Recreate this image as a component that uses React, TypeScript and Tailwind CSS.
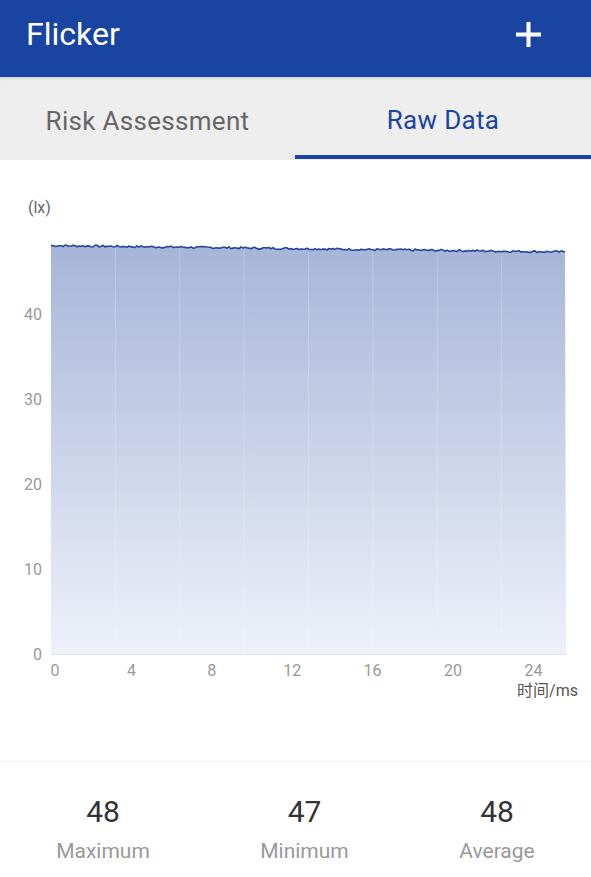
import React from "react";

const PLOT_LEFT = 51;
const PLOT_RIGHT = 566;
const PLOT_BOTTOM = 494; // svg coordinates (svg starts at page y=160)
const PX_PER_LX = 8.5;

function makeLine() {
    const pts: string[] = [];
    let seed = 7;
    const rand = () => {
        seed = (seed * 9301 + 49297) % 233280;
        return seed / 233280;
    };
    for (let x = PLOT_LEFT; x <= PLOT_RIGHT; x += 2) {
        const t = (x - PLOT_LEFT) / (PLOT_RIGHT - PLOT_LEFT);
        const v = 48.05 - 0.75 * t + (rand() - 0.5) * 0.24;
        const y = PLOT_BOTTOM - v * PX_PER_LX;
        pts.push(`${x},${y.toFixed(1)}`);
    }
    return pts;
}

function Chart() {
    const pts = makeLine();
    const line = "M" + pts.join(" L");
    const area = `${line} L${PLOT_RIGHT},${PLOT_BOTTOM} L${PLOT_LEFT},${PLOT_BOTTOM} Z`;
    const yTicks = [0, 10, 20, 30, 40];
    const xTicks = [0, 4, 8, 12, 16, 20, 24];
    const vLines = [1, 2, 3, 4, 5, 6, 7].map((i) => PLOT_LEFT + (i * (PLOT_RIGHT - PLOT_LEFT)) / 8);
    return (
        <svg width="591" height="600" viewBox="0 0 591 600" className="block" style={{ fontFamily: "Roboto, 'Noto Sans CJK SC', sans-serif" }}>
            <defs>
                <linearGradient id="fill" x1="0" y1="0" x2="0" y2="1">
                    <stop offset="0%" stopColor="#a6b5d8" />
                    <stop offset="100%" stopColor="#eef1fa" />
                </linearGradient>
            </defs>
            <text x="28" y="53" fontSize="16" fill="#666">(lx)</text>
            <path d={area} fill="url(#fill)" />
            {vLines.map((x) => (
                <line key={x} x1={x} y1={88} x2={x} y2={PLOT_BOTTOM} stroke="#ffffff" strokeOpacity="0.2" strokeWidth="1" />
            ))}
            <path d={line} fill="none" stroke="#25479b" strokeWidth="1.6" strokeLinejoin="round" />
            <line x1={PLOT_LEFT} y1={PLOT_BOTTOM + 0.5} x2={PLOT_RIGHT} y2={PLOT_BOTTOM + 0.5} stroke="#e3e6ee" />
            {yTicks.map((v) => (
                <text key={v} x="42" y={PLOT_BOTTOM - v * PX_PER_LX + 6} fontSize="16" fill="#999" textAnchor="end">
                    {v}
                </text>
            ))}
            {xTicks.map((v) => (
                <text key={v} x={v === 0 ? 55 : PLOT_LEFT + v * 20.1} y="516" fontSize="16" fill="#999" textAnchor="middle">
                    {v}
                </text>
            ))}
            <text x="578" y="536" fontSize="16" fill="#555" textAnchor="end">时间/ms</text>
        </svg>
    );
}

export default function App() {
    const stats = [
        { value: "48", label: "Maximum" },
        { value: "47", label: "Minimum" },
        { value: "48", label: "Average" },
    ];
    return (
        <div className="w-[591px] h-[877px] bg-white overflow-hidden flex flex-col" style={{ fontFamily: "Roboto, 'Noto Sans CJK SC', sans-serif" }}>
            <div className="h-[77px] bg-[#1a44a2] flex items-center justify-between pl-[26px] pr-[50px] shrink-0">
                <span className="text-white text-[32px] leading-none pb-[10px]">Flicker</span>
                <svg width="25" height="25" viewBox="0 0 25 25" className="mb-[8px]">
                    <rect x="10.5" y="0" width="4" height="25" fill="#fff" />
                    <rect x="0" y="10.5" width="25" height="4" fill="#fff" />
                </svg>
            </div>
            <div className="h-[83px] bg-[#eeeeee] flex shrink-0 shadow-[inset_0_3px_3px_-2px_rgba(0,0,0,0.15)]">
                <div className="w-[295px] flex items-center justify-center text-[26px] tracking-[0.3px] text-[#666] pt-[5px]">Risk Assessment</div>
                <div className="flex-1 flex flex-col">
                    <div className="flex-1 flex items-center justify-center text-[26px] tracking-[0.3px] text-[#1a44a2] pt-[9px]">Raw Data</div>
                    <div className="h-[4px] bg-[#1a44a2] mb-[1px]" />
                </div>
            </div>
            <Chart />
            <div className="h-px bg-[#eeeeee] mt-[1px]" />
            <div className="grid grid-cols-[206px_197px_188px] pt-[32px]">
                {stats.map((s) => (
                    <div key={s.label} className="flex flex-col items-center">
                        <span className="text-[30px] leading-[36px] text-[#333]">{s.value}</span>
                        <span className="text-[21px] leading-[26px] text-[#999] mt-[8px]">{s.label}</span>
                    </div>
                ))}
            </div>
        </div>
    );
}
